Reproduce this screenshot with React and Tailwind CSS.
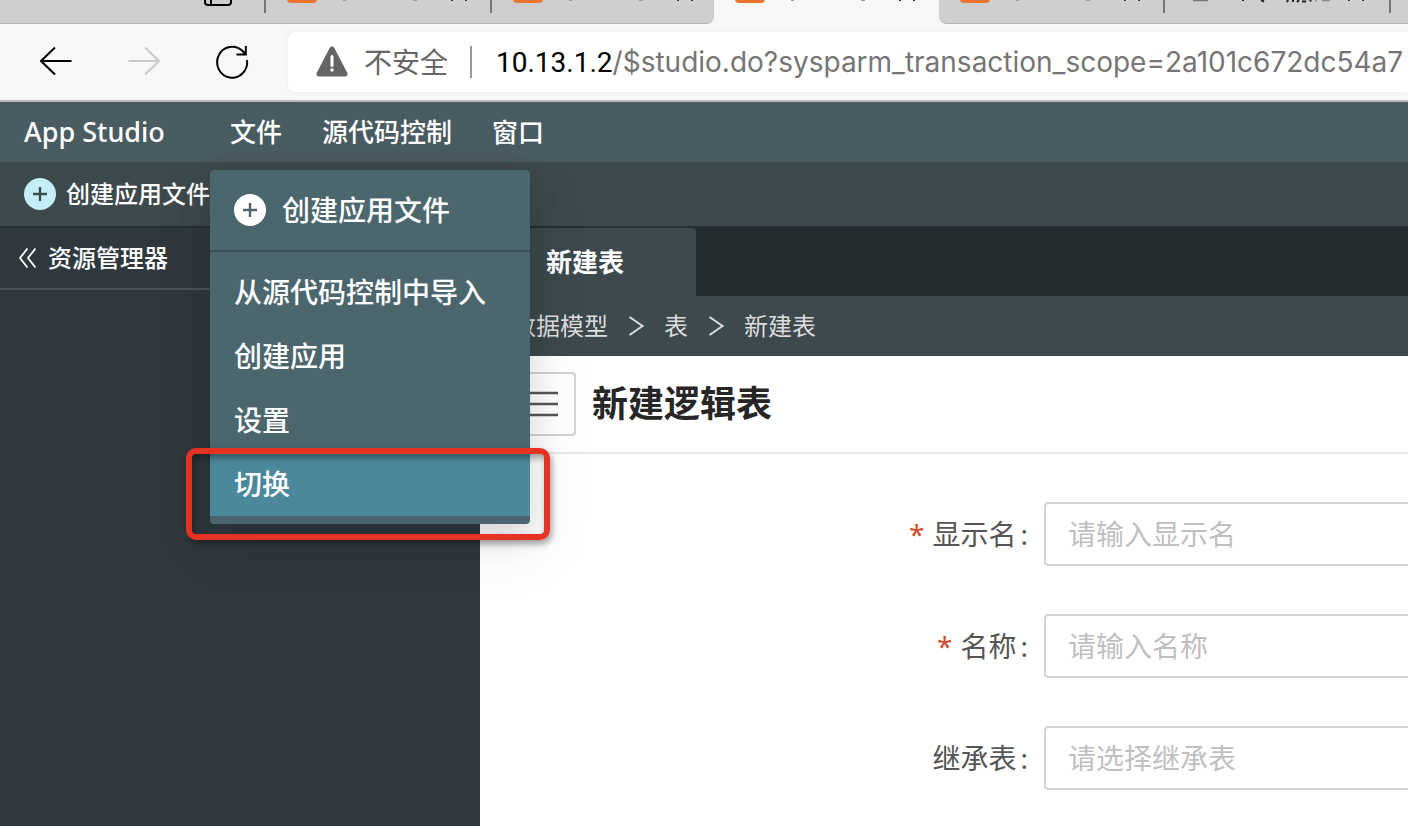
import React from "react";

const cjk = "font-['Noto_Sans',_'Noto_Sans_CJK_SC',sans-serif]";

/* Bottom edge of the browser's tab strip: only the feet of icons and titles show. */
function TabFoot({ plain = false }) {
  return (
    <div className="flex h-6 w-[225px] shrink-0 items-start">
      <svg className="ml-5 h-4 w-48" viewBox="0 0 192 16" fill="none" aria-hidden="true">
        {plain ? (
          <>
            <path d="M8 .5h15" stroke="#777" strokeWidth="1.500" />
            <path d="M58 0v1M76 0l3 1.500" stroke="#222" strokeWidth="2" />
            <path d="M103 0l-1 2M108 0v2M114 0l-2 2M117 1.500h4M126 0l-1 1.500" stroke="#222" strokeWidth="2" />
            <path d="M131 0v1.500M137 .5h8" stroke="#888" strokeWidth="1.500" />
            <path d="M164 0v1M178 0v1" stroke="#333" strokeWidth="2" />
          </>
        ) : (
          <>
            <path d="M1 -6h30v5a4 4 0 0 1-4 4H5a4 4 0 0 1-4-4z" fill="#ec7430" />
            <path d="M57 .5h3M127 .5h4" stroke="#999" />
            <path d="M166 0v1M180 0v1" stroke="#333" strokeWidth="2" />
          </>
        )}
      </svg>
    </div>
  );
}

function Divider() {
  return <span className="-ml-px h-[13px] w-0.5 shrink-0 bg-[#777]" />;
}

function BrowserTabs() {
  return (
    <div className="flex h-6 overflow-hidden bg-[#f7f7f7]">
      <div className="flex w-[714px] shrink-0 rounded-br-lg border-b border-[#b4b4b4] bg-[#cecece]">
        <div className="flex w-[265px] shrink-0 justify-end">
          <svg className="mr-8 h-2 w-8" viewBox="0 0 32 8" fill="none" stroke="#000" aria-hidden="true">
            <path d="M4 -2v4a3 3 0 0 0 3 3h20a3 3 0 0 0 3-3v-4M10 -2v7" strokeWidth="2" />
          </svg>
        </div>
        <Divider />
        <TabFoot />
        <Divider />
        <TabFoot />
      </div>
      <TabFoot />
      <div className="flex min-w-0 grow rounded-bl-lg border-b border-[#b4b4b4] bg-[#cecece]">
        <TabFoot />
        <Divider />
        <TabFoot plain />
        <Divider />
      </div>
    </div>
  );
}

function BrowserToolbar() {
  return (
    <div className="flex h-[78px] items-center border-b-2 border-[#b9b9bd] bg-[#f7f7f7]">
      <div className="flex w-72 shrink-0 items-center gap-14 pl-10">
        <button type="button" aria-label="后退" className="h-8 w-8">
          <svg viewBox="0 0 32 32" fill="none" stroke="#000" strokeWidth="2">
            <path d="M31.500 15H1M15 1.500L1 15l14 13.500" />
          </svg>
        </button>
        <button type="button" aria-label="前进" disabled className="h-8 w-8">
          <svg viewBox="0 0 32 32" fill="none" stroke="#c9c9c9" strokeWidth="2">
            <path d="M.5 15H31M17 1.500L31 15 17 28.500" />
          </svg>
        </button>
        <button type="button" aria-label="刷新" className="h-8 w-8">
          <svg viewBox="0 0 32 32" fill="none" stroke="#000" strokeWidth="2" overflow="visible">
            <path d="M31 14A15 15.500 0 1 1 26.500 5L30 8.500M29.800 0v8.500H20.500" />
          </svg>
        </button>
      </div>
      <div className="flex h-15 min-w-0 grow items-center overflow-hidden rounded-l-lg bg-white pl-7 shadow-[0_0_6px_rgba(0,0,0,0.06)]">
        <svg className="h-8 w-8 shrink-0" viewBox="0 0 32 32" aria-hidden="true">
          <path d="M16 3L29 28H3z" fill="#656565" stroke="#656565" strokeWidth="5" strokeLinejoin="round" />
          <path d="M16 10.500v9" stroke="#fff" strokeWidth="3" strokeLinecap="round" />
          <circle cx="16" cy="24" r="1.800" fill="#fff" />
        </svg>
        <span className="ml-4 shrink-0 text-[28px] leading-8 text-[#666]">不安全</span>
        <span className="mr-6 ml-[22px] h-8 w-0.5 shrink-0 bg-[#999]" />
        <span className="font-[Inter,sans-serif] text-[28px] leading-8 whitespace-nowrap text-[#757575]">
          <span className="font-[Roboto,sans-serif] text-black">10.13.1.2</span>/$studio.do?sysparm_transaction_scope=2a101c672dc54a7
        </span>
      </div>
    </div>
  );
}

function PlusDisc({ disc, plus }) {
  return (
    <svg className="h-8 w-8 shrink-0" viewBox="0 0 32 32" aria-hidden="true">
      <circle cx="16" cy="16" r="16" className={disc} />
      <path d="M9 16h14M16 9v14" strokeWidth="2.400" className={plus} />
    </svg>
  );
}

function FileMenu() {
  const item = "flex h-16 w-full items-center px-6 text-left";
  return (
    <div className="absolute top-[68px] left-0 z-10 w-80 rounded bg-[#4c666d] pb-2 text-[28px] leading-10 font-medium text-white shadow-[0_12px_32px_rgba(0,0,0,0.12),0_18px_56px_16px_rgba(0,0,0,0.05)]">
      <button type="button" className="flex h-20 w-full items-center gap-4 px-6">
        <PlusDisc disc="fill-white" plus="stroke-[#4c666d]" />
        创建应用文件
      </button>
      <ul className="border-t-2 border-[#3c4f55] pt-2">
        <li><button type="button" className={item}>从源代码控制中导入</button></li>
        <li><button type="button" className={item}>创建应用</button></li>
        <li><button type="button" className={item}>设置</button></li>
        <li className="relative">
          <button type="button" className={`${item} bg-[#4b889b]`}>切换</button>
          <span className="pointer-events-none absolute -top-1 -right-5 -bottom-6 -left-6 rounded-[10px] border-6 border-[#e53323] shadow-[2px_4px_6px_rgba(0,0,0,0.35),inset_2px_4px_6px_rgba(0,0,0,0.35)]" />
        </li>
      </ul>
    </div>
  );
}

function Crumb() {
  return (
    <svg className="h-5 w-4" viewBox="0 0 16 20" fill="none" stroke="#ddd" strokeWidth="2" aria-hidden="true">
      <path d="M1.500 1L14.500 10 1.500 19" />
    </svg>
  );
}

function Row({ id, label, required, children }) {
  return (
    <div className="grid grid-cols-[564px_minmax(0,1fr)] items-center">
      <label htmlFor={id} className="flex justify-end pr-4 text-[#555]">
        {required && <span className="mr-2 text-[#cf4a2c]">*</span>}
        {label}
        <span className="ml-1">:</span>
      </label>
      {children}
    </div>
  );
}

const field =
  "h-16 w-full appearance-none rounded-l border-2 border-r-0 border-[#d3d3d3] bg-white px-[22px] text-[28px] outline-none";

export default function App() {
  return (
    <div className={`flex min-h-screen flex-col overflow-hidden bg-white ${cjk}`}>
      <BrowserTabs />
      <BrowserToolbar />

      <header className="flex h-15 items-center bg-[#495c61] text-[26px] leading-8 font-medium text-white">
        <div className="w-[210px] shrink-0 pl-6 text-[27px]">App Studio</div>
        <nav className="flex h-full">
          <div className="relative flex">
            <button type="button" className="px-5">文件</button>
            <FileMenu />
          </div>
          <button type="button" className="px-5">源代码控制</button>
          <button type="button" className="px-5">窗口</button>
        </nav>
      </header>

      <div className="flex h-[66px] items-center border-b-2 border-[#262f32] bg-[#3c494d] pl-6 text-2xl font-medium text-white">
        <button type="button" className="flex items-center gap-[10px]">
          <PlusDisc disc="fill-[#c3eef7]" plus="stroke-[#3c494d]" />
          创建应用文件
        </button>
      </div>

      <div className="flex grow">
        <aside className="w-[480px] shrink-0 bg-[#2f393d]">
          <button type="button" className="flex h-[62px] w-full items-center gap-3 border-b-2 border-[#4a5356] pl-[18px] text-2xl font-medium text-white">
            <svg className="h-5 w-[18px]" viewBox="0 0 18 20" fill="none" stroke="#fff" strokeWidth="1.800" aria-hidden="true">
              <path d="M9.500.5L2 10l7.500 9.500M17.500.5L10 10l7.500 9.500" />
            </svg>
            资源管理器
          </button>
        </aside>

        <main className="min-w-0 grow">
          <div className="flex h-[68px] bg-[#252d30]">
            <button type="button" className="rounded-tr bg-[#3c494d] pr-[72px] pl-[66px] text-[26px] font-bold text-white">
              新建表
            </button>
          </div>
          <div className="flex h-15 items-center gap-5 bg-[#3c494d] pl-8 text-2xl text-[#ddd]">
            <a href="#model">数据模型</a>
            <Crumb />
            <a href="#tables">表</a>
            <Crumb />
            <span>新建表</span>
          </div>
          <div className="flex h-[98px] items-center gap-4 border-b-2 border-[#e8e8e8] pl-8">
            <button type="button" aria-label="菜单" className="flex h-16 w-16 items-center justify-center rounded border-2 border-[#d3d3d3]">
              <svg className="h-7 w-7" viewBox="0 0 28 28" stroke="#555" strokeWidth="2.400" aria-hidden="true">
                <path d="M0 3h28M0 14h28M0 25h28" />
              </svg>
            </button>
            <h1 className="text-4xl font-bold text-[#262626]">新建逻辑表</h1>
          </div>
          <form className="flex flex-col gap-12 pt-12 pb-9 text-[28px] leading-10">
            <Row id="display" label="显示名" required>
              <input id="display" type="text" placeholder="请输入显示名" className={`${field} placeholder:text-[#bfbfbf]`} />
            </Row>
            <Row id="name" label="名称" required>
              <input id="name" type="text" placeholder="请输入名称" className={`${field} placeholder:text-[#bfbfbf]`} />
            </Row>
            <Row id="parent" label="继承表">
              <select id="parent" defaultValue="" className={`${field} text-[#bfbfbf]`}>
                <option value="">请选择继承表</option>
              </select>
            </Row>
          </form>
        </main>
      </div>
    </div>
  );
}
